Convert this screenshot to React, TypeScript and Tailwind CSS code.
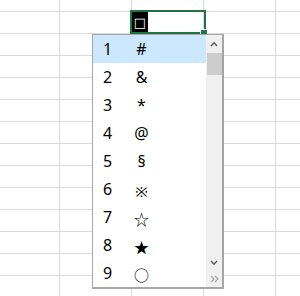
const items = [
  { n: "1", s: "#", low: false },
  { n: "2", s: "&", low: false },
  { n: "3", s: "*", low: false },
  { n: "4", s: "@", low: false },
  { n: "5", s: "§", low: false },
  { n: "6", s: "※", low: true },
  { n: "7", s: "☆", low: true },
  { n: "8", s: "★", low: true },
  { n: "9", s: "○", low: true },
];

const font = { fontFamily: '"Noto Sans", "Noto Sans CJK JP", sans-serif' };

function Chevron({ up }: { up?: boolean }) {
  return (
    <svg width="8" height="6" viewBox="0 0 8 6" fill="none">
      <path
        d={up ? "M1 5 L4 1.8 L7 5" : "M1 1 L4 4.2 L7 1"}
        stroke="#606060"
        strokeWidth="1.6"
      />
    </svg>
  );
}

export default function App() {
  const cells = Array.from({ length: 5 * 14 });

  return (
    <div className="relative h-[296px] w-[300px] overflow-hidden bg-white" style={font}>
      {/* sheet grid */}
      <div className="-mt-[10px] -ml-[12px] grid auto-rows-[22px] grid-cols-[repeat(5,72px)]">
        {cells.map((_, i) => (
          <div key={i} className="border-r border-b border-[#dadada]" />
        ))}
      </div>

      {/* active cell */}
      <div className="absolute top-[10px] left-[130px] flex h-[24px] w-[76px] border-2 border-[#217346]">
        <span
          className="flex h-full w-[16px] items-center justify-center bg-black text-[13px] leading-none font-bold text-white"
          style={{ fontFamily: '"DejaVu Sans", sans-serif' }}
        >
          □
        </span>
      </div>
      <div className="absolute top-[29px] left-[200px] h-[5px] w-[7px] border-t border-l border-white bg-[#217346]" />

      {/* dropdown list */}
      <div className="absolute top-[34px] left-[92px] flex h-[255px] w-[132px] border-t border-r-2 border-b-2 border-l border-[#a5a5a5] bg-white">
        <div className="flex w-[113px] flex-col">
          {items.map((it, i) => (
            <div
              key={it.n}
              className={`flex h-[28px] items-center pl-[10px] text-[16px] leading-[28px] text-black ${
                i === 0 ? "bg-[#cce8ff]" : ""
              }`}
            >
              <span className="w-[30px]">{it.n}</span>
              <span
                className={`w-[17px] text-center ${it.low ? "translate-y-[2px] text-[15px]" : ""}`}
              >
                {it.s}
              </span>
            </div>
          ))}
        </div>

        <div className="flex w-[16px] flex-col bg-[#f0f0f0]">
          <div className="flex h-[17px] items-center justify-center">
            <Chevron up />
          </div>
          <div className="mt-[1px] ml-[1px] h-[22px] bg-[#cdcdcd]" />
          <div className="flex-1" />
          <div className="flex h-[17px] items-center justify-center">
            <Chevron />
          </div>
          <div className="flex h-[16px] items-center justify-center">
            <svg width="9" height="8" viewBox="0 0 9 8" fill="none">
              <path d="M1 1 L4 4 L1 7 M5 1 L8 4 L5 7" stroke="#a8a8a8" strokeWidth="1.3" />
            </svg>
          </div>
        </div>
      </div>
    </div>
  );
}
